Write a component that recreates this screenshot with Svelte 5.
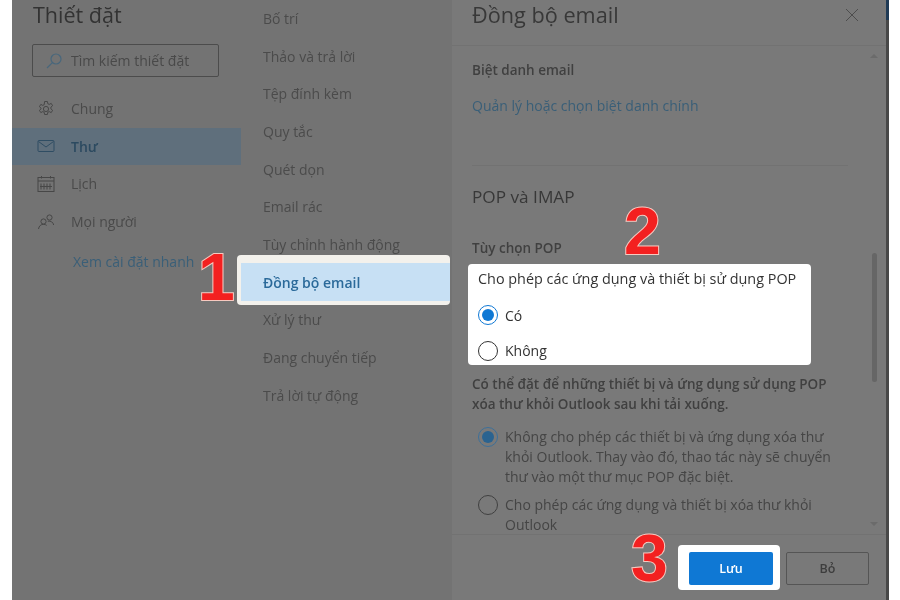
<script lang="ts">
  const mainNav = [
    { label: "Chung", icon: "gear" },
    { label: "Thư", icon: "mail", active: true },
    { label: "Lịch", icon: "calendar" },
    { label: "Mọi người", icon: "people" },
  ];

  const subNav = [
    "Bố trí",
    "Thảo và trả lời",
    "Tệp đính kèm",
    "Quy tắc",
    "Quét dọn",
    "Email rác",
    "Tùy chỉnh hành động",
    "Đồng bộ email",
    "Xử lý thư",
    "Đang chuyển tiếp",
    "Trả lời tự động",
  ];
</script>

<div class="page">
  <div class="app">
    <aside class="left">
      <h1>Thiết đặt</h1>
      <div class="search">
        <svg width="18" height="18" viewBox="0 0 18 18" fill="none" stroke="#48677c" stroke-width="1.2">
          <circle cx="11" cy="7" r="5" />
          <path d="M7.4 10.6 2 16" />
        </svg>
        <span>Tìm kiếm thiết đặt</span>
      </div>
      <nav>
        {#each mainNav as item}
          <div class="nav-item" class:active={item.active}>
            <svg width="18" height="18" viewBox="0 0 18 18" fill="none" stroke={item.active ? "#2f4d63" : "#474747"} stroke-width="1">
              {#if item.icon === "gear"}
                <circle cx="9" cy="9" r="2.6" />
                <path d="M7.6 1.5h2.8l.4 2.2 1.4.7 2-1 1.4 2.3-1.7 1.5v1.6l1.7 1.5-1.4 2.3-2-1-1.4.7-.4 2.2H7.6l-.4-2.2-1.4-.7-2 1-1.4-2.3 1.7-1.5V8.2L2.4 6.7l1.4-2.3 2 1 1.4-.7z" />
              {:else if item.icon === "mail"}
                <rect x="1" y="3.5" width="16" height="11" rx="1" />
                <path d="M1.5 4.500 9 10l7.500-5.500" />
              {:else if item.icon === "calendar"}
                <rect x="1" y="2.500" width="16" height="14" />
                <path d="M1 6h16M4.500 1v2.500M13.500 1v2.500M4 8.500v6M7 8.500v6M10 8.500v6M13 8.500v6M3 11.500h12" />
              {:else}
                <circle cx="6.500" cy="8.500" r="2.600" />
                <path d="M1.500 16c.4-3 2.400-4.700 5-4.700 1.300 0 2.300.4 3.200 1.100" />
                <circle cx="12.500" cy="4.500" r="2.600" />
                <path d="M10.800 8.200c2.900-.6 5.400 1 5.900 3.800" />
              {/if}
            </svg>
            <span>{item.label}</span>
          </div>
        {/each}
      </nav>
      <a class="quick" href="#top">Xem cài đặt nhanh</a>
    </aside>

    <div class="middle">
      {#each subNav as label}
        <div class="sub-item" class:current={label === "Đồng bộ email"}>
          <span>{label}</span>
        </div>
      {/each}
    </div>

    <section class="pane">
      <header>
        <h2>Đồng bộ email</h2>
        <svg class="close" width="14" height="14" viewBox="0 0 14 14" stroke="#4d4d4d" stroke-width="1">
          <path d="M1 1l12 12M13 1 1 13" />
        </svg>
      </header>

      <div class="scroll">
        <h3 class="alias">Biệt danh email</h3>
        <a class="manage" href="#top">Quản lý hoặc chọn biệt danh chính</a>
        <hr />
        <h2 class="pop-title">POP và IMAP</h2>
        <h3 class="pop-option">Tùy chọn POP</h3>

        <div class="callout">
          <p class="callout-title">Cho phép các ứng dụng và thiết bị sử dụng POP</p>
          <div class="radio-row first">
            <span class="radio on"></span>
            <span>Có</span>
          </div>
          <div class="radio-row">
            <span class="radio"></span>
            <span>Không</span>
          </div>
        </div>

        <p class="note">Có thể đặt để những thiết bị và ứng dụng sử dụng POP xóa thư khỏi Outlook sau khi tải xuống.</p>

        <div class="dim-row top">
          <span class="radio on dim"></span>
          <span>Không cho phép các thiết bị và ứng dụng xóa thư khỏi Outlook. Thay vào đó, thao tác này sẽ chuyển thư vào một thư mục POP đặc biệt.</span>
        </div>
        <div class="dim-row">
          <span class="radio dim"></span>
          <span>Cho phép các ứng dụng và thiết bị xóa thư khỏi Outlook</span>
        </div>

        <div class="scrollbar">
          <i class="up"></i>
          <b></b>
          <i class="down"></i>
        </div>
      </div>

      <footer>
        <div class="save-wrap"><button class="save">Lưu</button></div>
        <button class="discard">Bỏ</button>
      </footer>
    </section>
    <div class="edge"></div>
  </div>

  <span class="step one">1</span>
  <span class="step two">2</span>
  <span class="step three">3</span>
</div>

<style>
  :global(body) {
    margin: 0;
    background: #fff;
  }

  .page {
    position: relative;
    width: 900px;
    height: 600px;
    overflow: hidden;
    padding-left: 12px;
    box-sizing: border-box;
    font-family: "Open Sans", "Noto Sans", sans-serif;
    background: #fff;
    color: #414141;
    filter: blur(0.35px);
  }

  .app {
    display: flex;
    width: 877px;
    height: 600px;
    background: #737373;
  }

  h1, h2, h3, p {
    margin: 0;
    font-weight: 400;
  }

  a {
    text-decoration: none;
    color: #3a5f78;
  }

  .left {
    width: 229px;
    flex: none;
  }

  .left h1 {
    margin: 1px 0 0 21px;
    font-size: 21.5px;
    line-height: 28px;
    color: #333;
  }

  .search {
    display: flex;
    align-items: center;
    gap: 8px;
    box-sizing: border-box;
    width: 187px;
    height: 33px;
    margin: 15px 0 0 20px;
    padding-left: 12px;
    border: 1px solid #4c4c4c;
    border-radius: 2px;
    font-size: 14px;
    color: #494949;
  }

  nav {
    margin-top: 13px;
  }

  .nav-item {
    display: flex;
    align-items: center;
    gap: 16px;
    height: 37.6px;
    padding-left: 25px;
    font-size: 14px;
    color: #4a4a4a;
  }

  .nav-item.active {
    background: #5f6f7c;
    color: #2c4a60;
    font-weight: 600;
  }

  .quick {
    display: block;
    margin: 12px 0 0 61px;
    font-size: 14px;
    line-height: 20px;
  }

  .middle {
    width: 211px;
    flex: none;
    margin-top: -0.5px;
  }

  .sub-item {
    position: relative;
    display: flex;
    align-items: center;
    height: 37.7px;
    padding-left: 22px;
    font-size: 14px;
    color: #4b4b4b;
  }

  .sub-item span {
    position: relative;
  }

  .sub-item.current {
    margin-right: 2px;
    color: #2b6a9a;
    font-weight: 600;
  }

  /* white frame round the selected row, it sticks out above and to the left */
  .sub-item.current::before {
    content: "";
    position: absolute;
    inset: -8px 0 -4px -4px;
    border-radius: 4px;
    background: #f3f1ec;
  }

  .sub-item.current::after {
    content: "";
    position: absolute;
    inset: 0;
    background: #c7e0f4;
  }

  .sub-item.current span {
    z-index: 1;
  }

  .pane {
    display: flex;
    flex-direction: column;
    width: 434px;
    flex: none;
    background: #797979;
  }

  .pane header {
    display: flex;
    align-items: center;
    justify-content: space-between;
    box-sizing: border-box;
    height: 46px;
    padding: 0 27px 16px 20px;
    border-bottom: 1px solid #727272;
  }

  .pane header h2 {
    font-size: 21.7px;
    line-height: 28px;
    color: #383838;
  }

  .scroll {
    position: relative;
    flex: 1;
    min-height: 0;
    overflow: hidden;
    padding: 0 0 0 20px;
    font-size: 14px;
    color: #404040;
  }

  h3 {
    font-size: 13.5px;
    font-weight: 600;
  }

  .alias {
    margin-top: 14px;
    line-height: 20px;
  }

  .manage {
    display: block;
    margin-top: 16px;
    line-height: 20px;
  }

  hr {
    width: 376px;
    height: 1px;
    margin: 49px 0 0;
    border: 0;
    background: #727272;
  }

  .pop-title {
    margin-top: 19px;
    font-size: 17.2px;
    line-height: 24px;
    color: #383838;
  }

  .pop-option {
    margin-top: 29px;
    line-height: 20px;
  }

  .callout {
    box-sizing: border-box;
    width: 343px;
    height: 101px;
    margin: 6px 0 0 -4px;
    padding: 5px 10px;
    border-radius: 4px;
    background: #fff;
    color: #333;
  }

  .callout-title {
    font-size: 14.4px;
    font-weight: 500;
    line-height: 20px;
  }

  .radio-row {
    display: flex;
    align-items: center;
    gap: 7px;
    height: 24px;
    margin-top: 11.5px;
  }

  .radio-row.first {
    margin-top: 14px;
  }

  .radio {
    position: relative;
    flex: none;
    box-sizing: border-box;
    width: 20px;
    height: 20px;
    border: 1.5px solid #333;
    border-radius: 50%;
  }

  .radio.on {
    border-color: #0f78d4;
  }

  .radio.on::after {
    content: "";
    position: absolute;
    inset: 3px;
    border-radius: 50%;
    background: #0f78d4;
  }

  .radio.dim {
    border-color: #404040;
  }

  .radio.on.dim {
    border-color: #3d7099;
  }

  .radio.on.dim::after {
    background: #2a6390;
  }

  .note {
    width: 360px;
    margin-top: 9px;
    font-size: 13.5px;
    font-weight: 600;
    line-height: 20px;
  }

  .dim-row {
    display: flex;
    gap: 7px;
    width: 362px;
    margin: 8px 0 0 6px;
    line-height: 20px;
    color: #454545;
  }

  .dim-row.top {
    margin-top: 13px;
  }

  .scrollbar {
    position: absolute;
    top: 0;
    bottom: 0;
    right: 0;
    width: 22px;
  }

  .scrollbar b {
    position: absolute;
    top: 207px;
    left: 8px;
    width: 5px;
    height: 129px;
    border-radius: 3px;
    background: #666;
  }

  .scrollbar i {
    position: absolute;
    left: 6px;
    border-left: 4px solid transparent;
    border-right: 4px solid transparent;
  }

  .scrollbar .up {
    top: 8px;
    border-bottom: 4px solid #6b6b6b;
  }

  .scrollbar .down {
    bottom: 8px;
    border-top: 4px solid #6b6b6b;
  }

  footer {
    display: flex;
    justify-content: flex-end;
    box-sizing: border-box;
    height: 66px;
    padding: 17px 17px 0 0;
    gap: 13px;
    border-top: 1px solid #727272;
  }

  button {
    width: 84px;
    height: 33px;
    font: 600 12.5px "Open Sans", "Noto Sans", sans-serif;
    border-radius: 2px;
  }

  .save-wrap {
    margin: -7px -7px 0 0;
    width: 84px;
    height: 33px;
    padding: 7px 7px 5px 11px;
    border-radius: 4px;
    background: #fff;
  }

  .save {
    border: 0;
    background: #0f78d4;
    color: #fff;
  }

  .discard {
    width: 83px;
    border: 1px solid #555;
    background: transparent;
    color: #3d3d3d;
  }

  .edge {
    width: 3px;
    flex: none;
    background: linear-gradient(#1f3a55 20px, #484848 20px);
  }

  .step {
    position: absolute;
    font: 700 66px/46px "Liberation Sans", sans-serif;
    color: #f32020;
    -webkit-text-stroke: 2px #f7c9c0;
    paint-order: stroke fill;
  }

  .one { left: 198px; top: 254px; }
  .two { left: 624px; top: 208px; }
  .three { left: 631px; top: 535px; }
</style>
